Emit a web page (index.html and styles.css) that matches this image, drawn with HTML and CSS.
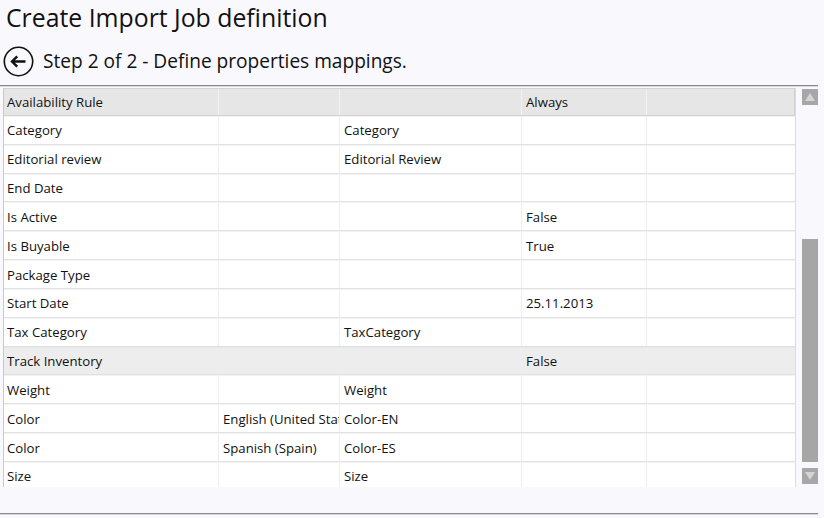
FILE: index.html
```html
<!DOCTYPE html>
<html>
<head>
<meta charset="utf-8">
<link rel="stylesheet" href="styles.css">
</head>
<body>
<div class="page">
  <h1 class="title">Create Import Job definition</h1>
  <div class="step">
    <svg class="back" width="31" height="31" viewBox="0 0 31 31">
      <circle cx="15.5" cy="15.5" r="14.2" fill="none" stroke="#111" stroke-width="1.6"/>
      <path d="M9 15.5 H22.5 M14.2 10.3 L9 15.5 L14.2 20.7" fill="none" stroke="#111" stroke-width="2.4" stroke-linecap="butt" stroke-linejoin="miter"/>
    </svg>
    <span class="step-text">Step 2 of 2 - Define properties mappings.</span>
  </div>
  <div class="rule"></div>
  <div class="content">
    <div class="grid">
      <div class="row sel"><div class="c c1">Availability Rule</div><div class="c c2"></div><div class="c c3"></div><div class="c c4">Always</div><div class="c c5"></div></div>
      <div class="row"><div class="c c1">Category</div><div class="c c2"></div><div class="c c3">Category</div><div class="c c4"></div><div class="c c5"></div></div>
      <div class="row"><div class="c c1">Editorial review</div><div class="c c2"></div><div class="c c3">Editorial Review</div><div class="c c4"></div><div class="c c5"></div></div>
      <div class="row"><div class="c c1">End Date</div><div class="c c2"></div><div class="c c3"></div><div class="c c4"></div><div class="c c5"></div></div>
      <div class="row"><div class="c c1">Is Active</div><div class="c c2"></div><div class="c c3"></div><div class="c c4">False</div><div class="c c5"></div></div>
      <div class="row"><div class="c c1">Is Buyable</div><div class="c c2"></div><div class="c c3"></div><div class="c c4">True</div><div class="c c5"></div></div>
      <div class="row"><div class="c c1">Package Type</div><div class="c c2"></div><div class="c c3"></div><div class="c c4"></div><div class="c c5"></div></div>
      <div class="row"><div class="c c1">Start Date</div><div class="c c2"></div><div class="c c3"></div><div class="c c4">25.11.2013</div><div class="c c5"></div></div>
      <div class="row"><div class="c c1">Tax Category</div><div class="c c2"></div><div class="c c3">TaxCategory</div><div class="c c4"></div><div class="c c5"></div></div>
      <div class="row hover"><div class="c c1">Track Inventory</div><div class="c c2"></div><div class="c c3"></div><div class="c c4">False</div><div class="c c5"></div></div>
      <div class="row"><div class="c c1">Weight</div><div class="c c2"></div><div class="c c3">Weight</div><div class="c c4"></div><div class="c c5"></div></div>
      <div class="row"><div class="c c1">Color</div><div class="c c2">English (United States)</div><div class="c c3">Color-EN</div><div class="c c4"></div><div class="c c5"></div></div>
      <div class="row"><div class="c c1">Color</div><div class="c c2">Spanish (Spain)</div><div class="c c3">Color-ES</div><div class="c c4"></div><div class="c c5"></div></div>
      <div class="row"><div class="c c1">Size</div><div class="c c2"></div><div class="c c3">Size</div><div class="c c4"></div><div class="c c5"></div></div>
    </div>
    <div class="scrollbar">
      <div class="sb-btn"><span class="tri up"></span></div>
      <div class="sb-thumb"></div>
      <div class="sb-btn"><span class="tri down"></span></div>
    </div>
  </div>
  <div class="rule bottom"></div>
</div>
</body>
</html>
```
FILE: styles.css
```css
html, body {
  margin: 0;
  padding: 0;
  background: #f8f8fd;
}
body {
  font-family: "Open Sans", "Noto Sans", sans-serif;
  color: #111;
  width: 824px;
  height: 518px;
  overflow: hidden;
}
.page {
  display: flex;
  flex-direction: column;
}
.title {
  margin: 0;
  padding: 0 0 0 6px;
  font-size: 24.8px;
  font-weight: 400;
  line-height: 34px;
  letter-spacing: 0;
}
.step {
  display: flex;
  align-items: center;
  height: 32px;
  margin-top: 11px;
  padding-left: 3px;
}
.back {
  display: block;
  flex: none;
}
.step-text {
  margin-left: 9px;
  font-size: 19.1px;
  line-height: 27px;
}
.rule {
  width: 818px;
  height: 1px;
  background: #8a8a8a;
  border-bottom: 1px solid #d6d6dc;
  margin-top: 8px;
}
.rule.bottom {
  margin-top: 26px;
}
.content {
  display: flex;
  margin-top: 1px;
  padding-left: 3px;
  height: 399px;
}
.grid {
  width: 791px;
  border-left: 1px solid #c9c9c9;
  border-right: 1px solid #dcdcdc;
  background: #fff;
  overflow: hidden;
  height: 399px;
  font-size: 13.2px;
}
.row {
  display: flex;
  height: 28.83px;
  box-sizing: border-box;
  border-bottom: 1px solid #e2e2e2;
  border-top: 1px solid #f3f3f3;
  flex: none;
}
.row.sel {
  height: 28px;
  background: #e6e6e6;
  border: 1px solid #d2d2d2;
  border-left: none;
}
.row.hover {
  background: #ededed;
  border-top: 1px solid #dfe9ec;
}
.c {
  box-sizing: border-box;
  border-right: 1px solid #eeeeee;
  padding-left: 4px;
  white-space: nowrap;
  overflow: hidden;
  display: flex;
  align-items: center;
}
.row.sel .c { border-right-color: #f2f2f2; }
.c1 { width: 215px; padding-left: 3px; }
.c2 { width: 121px; }
.c3 { width: 182px; }
.c4 { width: 125px; }
.c5 { flex: 1; border-right: none; }
.scrollbar {
  width: 16px;
  margin-left: 6px;
  padding-top: 1px;
  display: flex;
  flex-direction: column;
}
.sb-btn {
  width: 16px;
  height: 16px;
  background: #a7a7a7;
  display: flex;
  align-items: center;
  justify-content: center;
  flex: none;
}
.tri {
  width: 0;
  height: 0;
  border-left: 5px solid transparent;
  border-right: 5px solid transparent;
}
.tri.up { border-bottom: 8px solid #d4d4d4; }
.tri.down { border-top: 8px solid #d4d4d4; }
.sb-thumb {
  width: 16px;
  height: 223px;
  margin-top: 134px;
  margin-bottom: 6px;
  background: #a6a6a6;
  flex: none;
}
```
